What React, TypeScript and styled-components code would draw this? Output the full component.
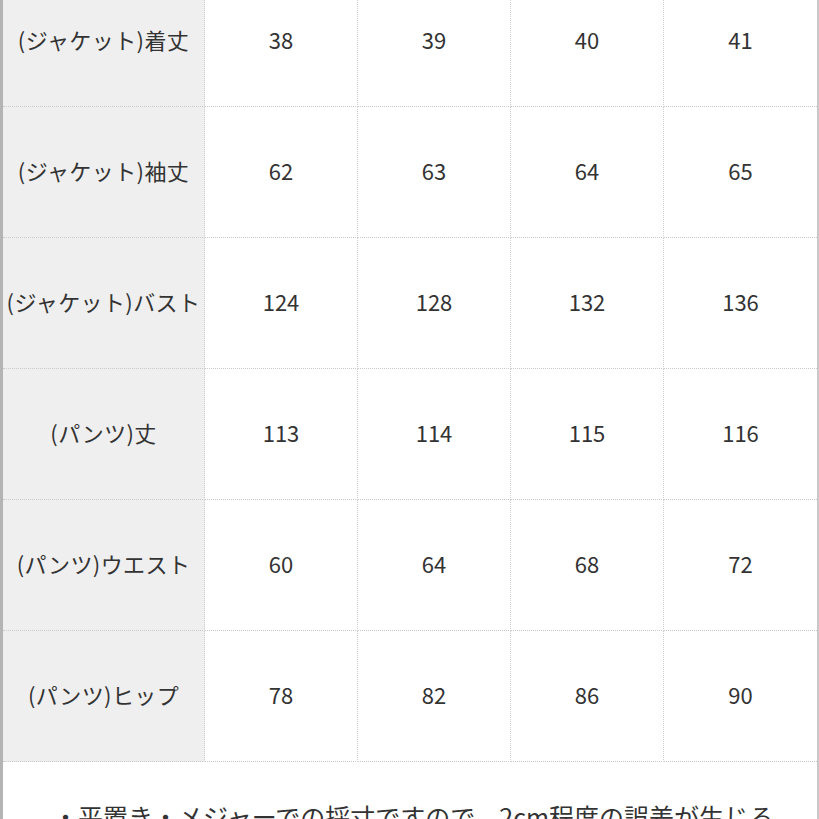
import React from "react";
import styled, {createGlobalStyle} from "styled-components";

const GlobalStyle = createGlobalStyle`
    html, body {
        margin: 0;
        padding: 0;
        background: #ffffff;
    }
    body {
        font-family: "Noto Sans CJK JP", "Noto Sans", sans-serif;
        color: #333333;
    }
`;

const Page = styled.div`
    width: 819px;
    height: 819px;
    overflow: hidden;
    box-sizing: border-box;
    border-left: 3px solid #b4b4b4;
    border-right: 2px solid #c8c8c8;
    background: #ffffff;
`;

const Table = styled.div`
    margin-top: -24px;
    display: grid;
    grid-template-columns: 202px repeat(4, 1fr);
`;

const Cell = styled.div<{ $head?: boolean; $last?: boolean }>`
    height: 126px;
    padding-bottom: 4px;
    display: flex;
    align-items: center;
    justify-content: center;
    box-sizing: content-box;
    border-bottom: 1px dotted #c9c9c9;
    border-right: ${p => (p.$last ? "none" : "1px dotted #cfcfcf")};
    background: ${p => (p.$head ? "#efefef" : "#ffffff")};
    font-size: 22px;
    line-height: 1;
    color: #333333;
    white-space: nowrap;
    letter-spacing: ${p => (p.$head ? "0.4px" : "0")};
`;

const Note = styled.div`
    padding: 37px 0 0 50px;
    font-size: 25px;
    line-height: 1.4;
    color: #333333;
    white-space: nowrap;
`;

const rows: [string, number[]][] = [
    ["(ジャケット)着丈", [38, 39, 40, 41]],
    ["(ジャケット)袖丈", [62, 63, 64, 65]],
    ["(ジャケット)バスト", [124, 128, 132, 136]],
    ["(パンツ)丈", [113, 114, 115, 116]],
    ["(パンツ)ウエスト", [60, 64, 68, 72]],
    ["(パンツ)ヒップ", [78, 82, 86, 90]],
];

export default function App() {
    return (
        <>
            <GlobalStyle/>
            <Page>
                <Table>
                    {rows.map(([label, values]) => (
                        <React.Fragment key={label}>
                            <Cell $head>{label}</Cell>
                            {values.map((v, i) => (
                                <Cell key={i} $last={i === values.length - 1}>{v}</Cell>
                            ))}
                        </React.Fragment>
                    ))}
                </Table>
                <Note>・平置き・メジャーでの採寸ですので、2cm程度の誤差が生じる</Note>
            </Page>
        </>
    );
}
